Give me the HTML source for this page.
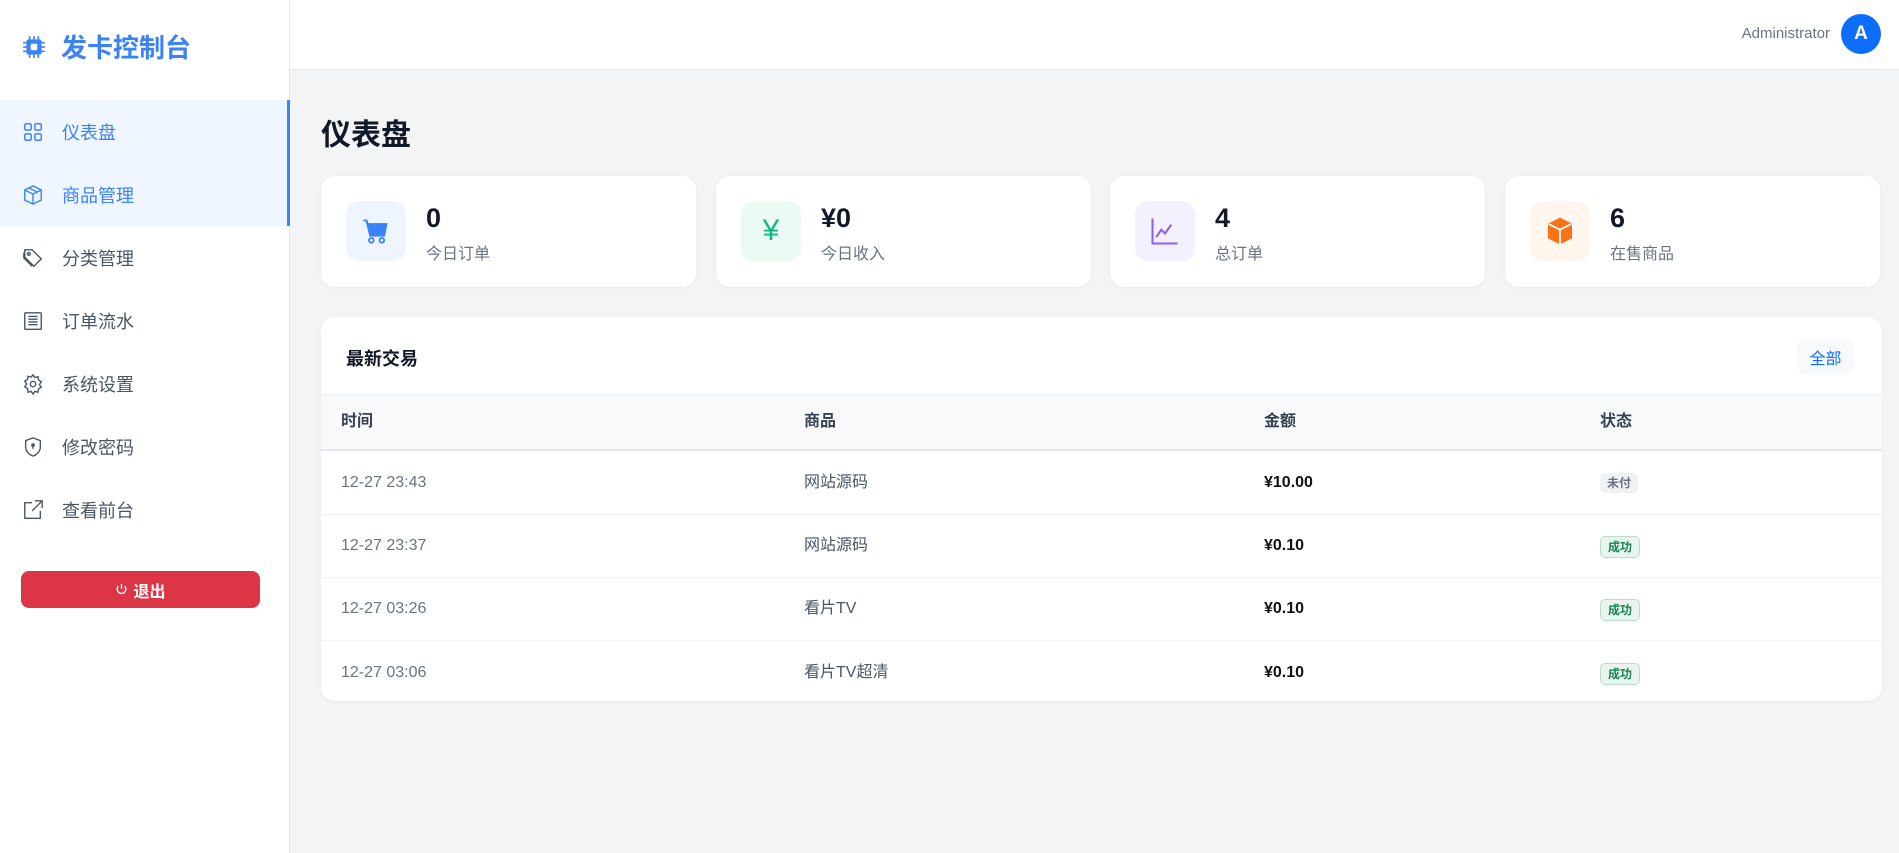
<!DOCTYPE html>
<html><head><meta charset="utf-8"><style>
*{box-sizing:border-box;margin:0;padding:0}
body{width:1899px;height:853px;overflow:hidden;background:#f3f4f6;font-family:"Liberation Sans","Noto Sans CJK SC",sans-serif;color:#111827;position:relative}
.side{position:absolute;left:0;top:0;width:290px;height:853px;background:#fff;border-right:1px solid #e5e7eb}
.logo{position:absolute;left:21px;top:28px;display:flex;align-items:center;gap:14px;color:#3b82f6;font-size:26px;font-weight:bold}
.menu{position:absolute;top:100px;left:0;width:290px}
.mi{height:63px;display:flex;align-items:center;padding-left:22px;gap:18px;font-size:18px;color:#4b5563}
.mi.act{background:#eff6ff;color:#3b82f6;border-right:3px solid #3b82f6}
.mi svg{width:22px;height:22px;flex:none}
.logout{position:absolute;left:21px;top:571px;width:239px;height:37px;border-radius:8px;background:#dc3545;color:#fff;font-size:16px;font-weight:bold;display:flex;align-items:center;justify-content:center;gap:5px}
.top{position:absolute;left:290px;top:0;right:0;height:70px;background:#fff;border-bottom:1px solid #e5e7eb}
.admin{position:absolute;right:69px;top:25px;font-size:15px;color:#6b7280}
.av{position:absolute;right:18px;top:14px;width:40px;height:40px;border-radius:50%;background:#0d6efd;color:#fff;font-weight:bold;font-size:19px;display:flex;align-items:center;justify-content:center}
h1{position:absolute;left:321px;top:110px;font-size:30px;font-weight:bold}
.card{position:absolute;top:176px;width:375px;height:111px;background:#fff;border-radius:14px;box-shadow:0 1px 3px rgba(0,0,0,.05)}
.ib{position:absolute;left:25px;top:25px;width:60px;height:60px;border-radius:13px;display:flex;align-items:center;justify-content:center}
.num{position:absolute;left:105px;top:27px;font-size:27px;font-weight:bold}
.lab{position:absolute;left:105px;top:64px;font-size:16px;color:#6b7280}
.tbl{position:absolute;left:321px;top:317px;width:1561px;height:384px;background:#fff;border-radius:14px;overflow:hidden;box-shadow:0 1px 3px rgba(0,0,0,.05)}
.tt{position:absolute;left:25px;top:28px;font-size:18px;font-weight:bold}
.all{position:absolute;right:28px;top:22px;width:57px;height:35px;border-radius:8px;background:#f8f9fb;color:#0d6efd;font-size:16px;display:flex;align-items:center;justify-content:center}
.thead{position:absolute;top:77px;left:0;right:0;height:57px;background:#f8f9fb;border-bottom:2px solid #e5e7eb;border-top:1px solid #f0f1f3}
.row{position:absolute;left:0;right:0;height:63px;border-bottom:1px solid #f0f1f3}
.c{position:absolute;top:50%;margin-top:-10px;line-height:20px;height:20px;font-size:16px;white-space:nowrap}
.thead .c{font-weight:bold;color:#374151}
.c1{left:20px;color:#6b7280}.c2{left:483px;color:#4b5563}.c3{left:943px;font-weight:bold;color:#111}.c4{left:1279px}
.bd{display:inline-block;font-size:12px;font-weight:bold;padding:2px 7px;border-radius:5px;line-height:16px;vertical-align:top}
.un{background:#f0f1f3;color:#6b7280}
.ok{background:#e8f5ee;color:#198754;border:1px solid #b9dfc9}
</style></head><body>
<div class="side">
<div class="logo"><svg width="26" height="26" viewBox="0 0 24 24"><rect x="5" y="5" width="14" height="14" rx="2" fill="#3b82f6"/><rect x="9" y="9" width="6" height="6" rx="1" fill="#fff"/><g stroke="#3b82f6" stroke-width="1.5"><path d="M8 2v3M12 2v3M16 2v3M8 19v3M12 19v3M16 19v3M2 8h3M2 12h3M2 16h3M19 8h3M19 12h3M19 16h3"/></g></svg>发卡控制台</div>
<div class="menu">
<div class="mi act"><svg viewBox="0 0 24 24" fill="none" stroke="#3b82f6" stroke-width="1.6"><rect x="3" y="3" width="7" height="7" rx="1.5"/><rect x="14" y="3" width="7" height="7" rx="1.5"/><rect x="3" y="14" width="7" height="7" rx="1.5"/><rect x="14" y="14" width="7" height="7" rx="1.5"/></svg>仪表盘</div>
<div class="mi" style="background:#eff6ff;color:#3b82f6;border-right:3px solid #3b82f6"><svg viewBox="0 0 24 24" fill="none" stroke="#3b82f6" stroke-width="1.5"><path d="M12 2l9 4.5v11L12 22l-9-4.5v-11z"/><path d="M3 6.5l9 4.5 9-4.5M12 11v11M7.5 4.2l9 4.5"/></svg>商品管理</div>
<div class="mi"><svg viewBox="0 0 24 24" fill="none" stroke="#4b5563" stroke-width="1.5"><path d="M3 3h8l10 10-8 8L3 11z"/><circle cx="7.5" cy="7.5" r="1.5"/><path d="M2 6v6l9 9"/></svg>分类管理</div>
<div class="mi"><svg viewBox="0 0 24 24" fill="none" stroke="#4b5563" stroke-width="1.5"><rect x="3" y="3" width="18" height="18" rx="1"/><path d="M7 7h10M7 10h10M7 13h10M7 16h10"/></svg>订单流水</div>
<div class="mi"><svg viewBox="0 0 24 24" fill="none" stroke="#4b5563" stroke-width="1.5"><circle cx="12" cy="12" r="3"/><path d="M12 2l2 3 3.5-1 .5 3.5 3 2-2 3 2 3-3 2-.5 3.5-3.5-1-2 3-2-3-3.5 1L6 17l-3-2 2-3-2-3 3-2 .5-3.5 3.5 1z"/></svg>系统设置</div>
<div class="mi"><svg viewBox="0 0 24 24" fill="none" stroke="#4b5563" stroke-width="1.5"><path d="M12 2l8 3v7c0 5-4 8.5-8 10-4-1.5-8-5-8-10V5z"/><circle cx="12" cy="10" r="1.3" fill="#4b5563"/><path d="M12 11v3"/></svg>修改密码</div>
<div class="mi"><svg viewBox="0 0 24 24" fill="none" stroke="#4b5563" stroke-width="1.5"><path d="M11 4H3v17h17v-8"/><path d="M14 2h8v8M22 2L11 13"/></svg>查看前台</div>
</div>
<div class="logout"><svg width="13" height="13" viewBox="0 0 24 24" fill="none" stroke="#fff" stroke-width="2.5"><path d="M12 2v9"/><path d="M6 6a8 8 0 1 0 12 0"/></svg>退出</div>
</div>
<div class="top"><div class="admin">Administrator</div><div class="av">A</div></div>
<h1>仪表盘</h1>
<div class="card" style="left:321px"><div class="ib" style="background:#eef5ff"><svg width="28" height="28" viewBox="0 0 24 24"><path d="M1 3h3l1 3h16l-2 10H7L4 4" fill="none" stroke="#3b82f6" stroke-width="1.6"/><path d="M5 6h16l-2 10H7z" fill="#3b82f6"/><circle cx="8" cy="20" r="2" fill="none" stroke="#3b82f6" stroke-width="1.6"/><circle cx="17" cy="20" r="2" fill="none" stroke="#3b82f6" stroke-width="1.6"/></svg></div><div class="num">0</div><div class="lab">今日订单</div></div>
<div class="card" style="left:716px"><div class="ib" style="background:#e9fbf3;color:#10b981;font-size:30px">¥</div><div class="num">¥0</div><div class="lab">今日收入</div></div>
<div class="card" style="left:1110px"><div class="ib" style="background:#f4f1ff"><svg width="30" height="30" viewBox="0 0 24 24" fill="none" stroke="#8b5cf6" stroke-width="1.6"><path d="M2 2v20h20"/><path d="M5 17l4-6 3 3 5-7"/></svg></div><div class="num">4</div><div class="lab">总订单</div></div>
<div class="card" style="left:1505px"><div class="ib" style="background:#fff6ee"><svg width="32" height="32" viewBox="0 0 24 24"><path d="M12 2l9 4.5v11L12 22l-9-4.5v-11z" fill="#f97316"/><path d="M3.5 6.8L12 11l8.5-4.2M12 11v11" stroke="#fff" stroke-width="1.3" fill="none"/></svg></div><div class="num">6</div><div class="lab">在售商品</div></div>
<div class="tbl">
<div class="tt">最新交易</div><div class="all">全部</div>
<div class="thead"><span class="c c1" style="color:#374151">时间</span><span class="c c2" style="color:#374151">商品</span><span class="c c3" style="color:#374151">金额</span><span class="c c4">状态</span></div>
<div class="row" style="top:135px"><span class="c c1">12-27 23:43</span><span class="c c2">网站源码</span><span class="c c3">¥10.00</span><span class="c c4"><span class="bd un">未付</span></span></div>
<div class="row" style="top:198px"><span class="c c1">12-27 23:37</span><span class="c c2">网站源码</span><span class="c c3">¥0.10</span><span class="c c4"><span class="bd ok">成功</span></span></div>
<div class="row" style="top:261px"><span class="c c1">12-27 03:26</span><span class="c c2">看片TV</span><span class="c c3">¥0.10</span><span class="c c4"><span class="bd ok">成功</span></span></div>
<div class="row" style="top:324px;border:none"><span class="c c1">12-27 03:06</span><span class="c c2">看片TV超清</span><span class="c c3">¥0.10</span><span class="c c4"><span class="bd ok">成功</span></span></div>
</div>
</body></html>
